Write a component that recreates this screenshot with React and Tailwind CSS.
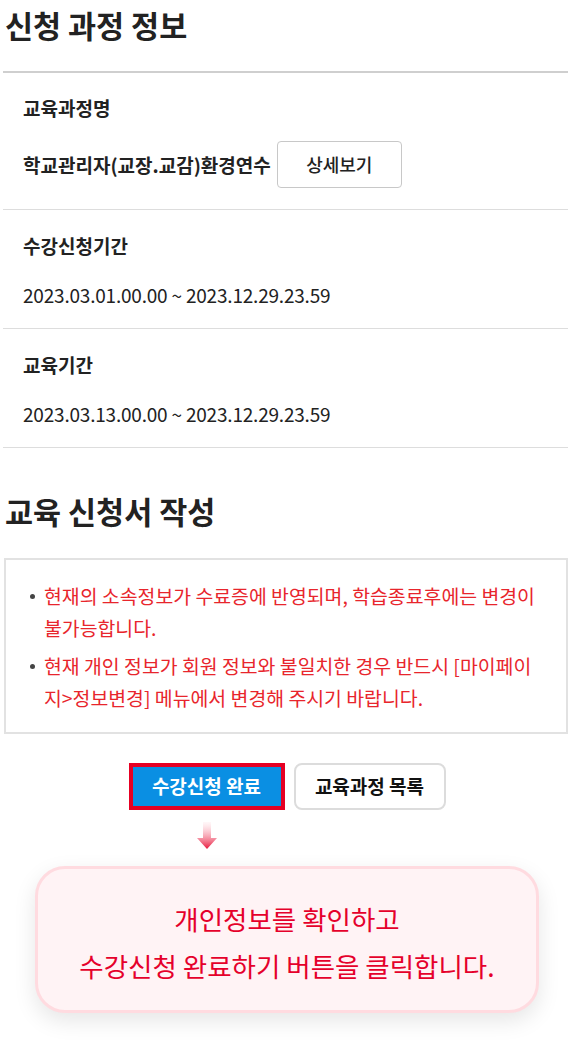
export default function App() {
  const font = { fontFamily: '"Noto Sans CJK KR", "Noto Sans", sans-serif' };
  return (
    <div className="w-[574px] bg-white pl-[3px] pr-[6px] pb-[38px] text-[#222]" style={font}>
      {/* 신청 과정 정보 */}
      <h2 className="h-[50px] pl-[2px] text-[30.5px] font-bold leading-[50px]">신청 과정 정보</h2>
      <div className="mt-[21px] h-[2px] bg-[#cfcfcf]" />

      <div className="flex flex-col gap-[21px] px-[20px] pt-[23px] pb-[21px]">
        <div className="text-[19px] font-semibold leading-[24px]">교육과정명</div>
        <div className="flex items-center gap-[6px]">
          <span className="text-[19px] font-bold leading-[24px]">학교관리자(교장.교감)환경연수</span>
          <button className="flex h-[47px] w-[125px] items-center justify-center rounded-[4px] border border-[#c8c8c8] bg-white text-[18px] font-medium text-[#222]">
            상세보기
          </button>
        </div>
      </div>
      <div className="h-px bg-[#dddddd]" />

      <div className="flex flex-col gap-[25px] px-[20px] pt-[24px] pb-[21px]">
        <div className="text-[19px] font-semibold leading-[24px]">수강신청기간</div>
        <div className="text-[19px] leading-[24px] tracking-[-0.2px]">2023.03.01.00.00 ~ 2023.12.29.23.59</div>
      </div>
      <div className="h-px bg-[#dddddd]" />

      <div className="flex flex-col gap-[25px] px-[20px] pt-[24px] pb-[21px]">
        <div className="text-[19px] font-semibold leading-[24px]">교육기간</div>
        <div className="text-[19px] leading-[24px] tracking-[-0.2px]">2023.03.13.00.00 ~ 2023.12.29.23.59</div>
      </div>
      <div className="h-px bg-[#dddddd]" />

      {/* 교육 신청서 작성 */}
      <h2 className="mt-[38px] h-[50px] pl-[2px] text-[30.5px] font-bold leading-[50px]">교육 신청서 작성</h2>

      <div className="mt-[22px] ml-[1px] border-2 border-[#e2e2e2] pl-[24px] pr-[22px] pt-[20px] pb-[18px]">
        <ul className="flex flex-col gap-[6px] text-[19.4px] leading-[32px] text-[#e8252c]">
          <li className="flex">
            <span className="mr-[9px] mt-[14px] h-[5px] w-[5px] shrink-0 rounded-full bg-[#444]" />
            <span>현재의 소속정보가 수료증에 반영되며, 학습종료후에는 변경이 불가능합니다.</span>
          </li>
          <li className="flex">
            <span className="mr-[9px] mt-[14px] h-[5px] w-[5px] shrink-0 rounded-full bg-[#444]" />
            <span>현재 개인 정보가 회원 정보와 불일치한 경우 반드시 [마이페이지&gt;정보변경] 메뉴에서 변경해 주시기 바랍니다.</span>
          </li>
        </ul>
      </div>

      {/* 버튼 */}
      <div className="mt-[29px] flex justify-center gap-[9px] pl-[3px]">
        <div className="flex flex-col items-center">
          <button className="flex h-[47px] w-[156px] items-center justify-center border-[4px] border-[#e60023] bg-[#0a8fe3] text-[19px] font-bold text-white">
            수강신청 완료
          </button>
          <svg className="mt-[12px]" width="20" height="27" viewBox="0 0 20 27">
            <defs>
              <linearGradient id="arrowFill" x1="0" y1="0" x2="0" y2="1">
                <stop offset="0" stopColor="#ffe6ea" stopOpacity="0.3" />
                <stop offset="1" stopColor="#e8183c" />
              </linearGradient>
            </defs>
            <path d="M6 0 H14 V16 H20 L10 27 L0 16 H6 Z" fill="url(#arrowFill)" />
          </svg>
        </div>
        <button className="flex h-[47px] w-[152px] items-center justify-center rounded-[8px] border-2 border-[#dcdcdc] bg-white text-[19px] font-bold text-[#111]">
          교육과정 목록
        </button>
      </div>

      {/* 안내 말풍선 */}
      <div className="mt-[17px] flex justify-center pl-[3px]">
        <div className="flex h-[147px] w-[504px] flex-col items-center justify-center rounded-[30px] border-[3px] border-[#ffdbe0] bg-[#fff3f5] pt-[4px] text-center text-[26.5px] leading-[47px] text-[#e5002b] shadow-[0_8px_22px_rgba(0,0,0,0.10)]">
          <div>개인정보를 확인하고</div>
          <div>수강신청 완료하기 버튼을 클릭합니다.</div>
        </div>
      </div>
    </div>
  );
}
